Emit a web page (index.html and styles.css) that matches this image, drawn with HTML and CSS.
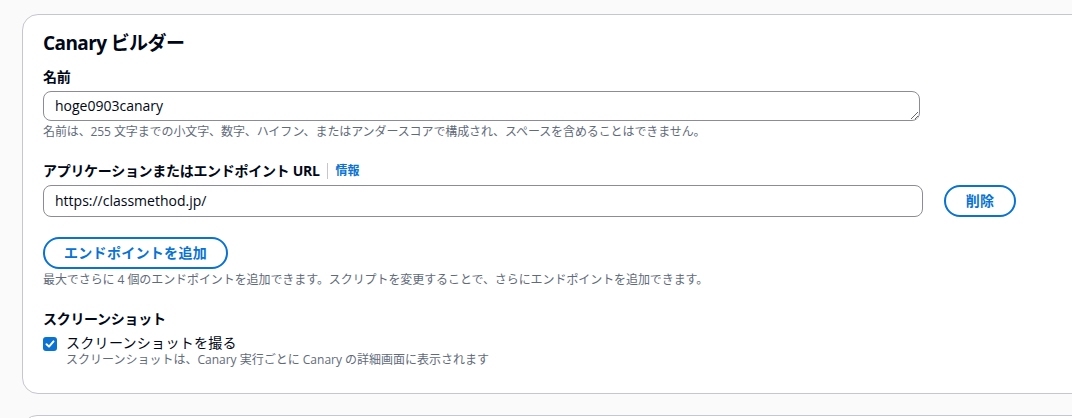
FILE: index.html
```html
<!DOCTYPE html>
<html lang="ja">
<head>
<meta charset="utf-8">
<link rel="stylesheet" href="styles.css">
</head>
<body>
<div class="page">
  <section class="card">
    <h2 class="title">Canary ビルダー</h2>

    <div class="field">
      <div class="label">名前</div>
      <textarea class="input textarea" rows="1">hoge0903canary</textarea>
      <div class="hint">名前は、255 文字までの小文字、数字、ハイフン、またはアンダースコアで構成され、スペースを含めることはできません。</div>
    </div>

    <div class="field field-url">
      <div class="label">アプリケーションまたはエンドポイント URL<span class="sep"></span><a class="info">情報</a></div>
      <div class="row">
        <div class="input url">https://classmethod.jp/</div>
        <button class="btn btn-del">削除</button>
      </div>
    </div>

    <div class="field field-add">
      <button class="btn btn-add">エンドポイントを追加</button>
      <div class="hint">最大でさらに 4 個のエンドポイントを追加できます。スクリプトを変更することで、さらにエンドポイントを追加できます。</div>
    </div>

    <div class="field field-shot">
      <div class="label">スクリーンショット</div>
      <div class="check-row">
        <span class="checkbox">
          <svg width="14" height="14" viewBox="0 0 14 14"><polyline points="3.5,7.2 6,9.6 10.5,4.4" fill="none" stroke="#fff" stroke-width="2" stroke-linecap="round" stroke-linejoin="round"/></svg>
        </span>
        <div class="check-text">
          <div class="check-label">スクリーンショットを撮る</div>
          <div class="hint">スクリーンショットは、Canary 実行ごとに Canary の詳細画面に表示されます</div>
        </div>
      </div>
    </div>
  </section>
  <section class="card card-next"></section>
</div>
</body>
</html>
```

FILE: styles.css
```css
* { box-sizing: border-box; }
html, body {
  margin: 0;
  padding: 0;
  background: #fafafa;
}
body {
  font-family: "Open Sans", "Noto Sans CJK JP", sans-serif;
  color: #000716;
}
.page {
  width: 1072px;
  height: 418px;
  overflow: hidden;
  padding: 14px 0 0 22px;
  display: flex;
  flex-direction: column;
  gap: 21px;
}
.card {
  width: 1080px;
  flex-shrink: 0;
  background: #fff;
  border: 1px solid #c6c6cd;
  border-radius: 16px;
  padding: 14px 20px 25px 20px;
  display: flex;
  flex-direction: column;
}
.card-next { height: 30px; padding: 0; }
.title {
  margin: 0;
  font-size: 19px;
  line-height: 28px;
  font-weight: 700;
  letter-spacing: -0.6px;
}
.title + .field { margin-top: 10px; }
.field { display: flex; flex-direction: column; }
.label {
  font-size: 14px;
  line-height: 20px;
  font-weight: 700;
  letter-spacing: -0.3px;
  display: flex;
  align-items: center;
  margin-bottom: 4px;
}
.sep {
  display: inline-block;
  width: 1px;
  height: 16px;
  background: #c6c6cd;
  margin: 0 8px 0 7px;
}
.info {
  color: #0972d3;
  font-size: 12px;
  font-weight: 700;
  letter-spacing: 0;
}
.input {
  width: 877px;
  height: 30px;
  border: 1px solid #8c8c94;
  border-radius: 8px;
  background: #fff;
  font-family: "Open Sans", "Noto Sans CJK JP", sans-serif;
  font-size: 14px;
  color: #000716;
  padding: 4px 11px;
  line-height: 20px;
}
.textarea {
  display: block;
  resize: vertical;
  overflow: hidden;
  margin: 0;
  outline: none;
}
.url { width: 880px; height: 32px; padding: 5px 11px; }
.hint {
  font-size: 12px;
  line-height: 16px;
  color: #5f6b7a;
  margin-top: 3px;
  letter-spacing: -0.1px;
  white-space: nowrap;
}
.field-url { margin-top: 21px; }
.row { display: flex; align-items: center; gap: 21px; }
.btn {
  font-family: "Open Sans", "Noto Sans CJK JP", sans-serif;
  font-size: 14px;
  font-weight: 700;
  color: #0972d3;
  background: #fff;
  border: 2px solid #0972d3;
  border-radius: 20px;
  height: 32px;
  line-height: 18px;
  padding: 0 20px;
  letter-spacing: 0.3px;
  white-space: nowrap;
}
.btn-del { width: 72px; padding: 0; }
.field-add { margin-top: 20px; align-items: flex-start; }
.btn-add { width: 185px; padding: 0; }
.field-add .hint { margin-top: 3px; letter-spacing: -0.08px; }
.field-shot { margin-top: 21px; }
.field-shot .label { margin-bottom: 5px; }
.check-row { display: flex; gap: 9px; }
.checkbox {
  width: 14px;
  height: 14px;
  margin-top: 3px;
  border-radius: 3px;
  background: #0972d3;
  display: flex;
  flex-shrink: 0;
}
.check-label {
  font-size: 14px;
  line-height: 18px;
  letter-spacing: 0.3px;
}
.check-text .hint { margin-top: 0; letter-spacing: 0; }
```
